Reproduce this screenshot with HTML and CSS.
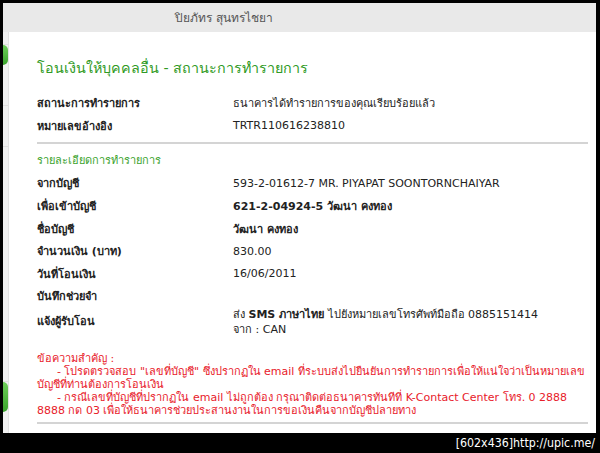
FILE: index.html
```html
<!DOCTYPE html>
<html lang="th">
<head>
<meta charset="utf-8">
<title>โอนเงินให้บุคคลอื่น</title>
<link rel="stylesheet" href="styles.css">
</head>
<body>
<div class="screen">
  <div class="window">
    <div class="topbar"><span class="user">ปิยภัทร สุนทรไชยา</span></div>
    <div class="main">
      <div class="side">
        <div class="seg s1"></div>
        <div class="tab t1"></div>
        <div class="seg s2"></div>
        <div class="seg s3"></div>
        <div class="seg s4"></div>
        <div class="tab t2"></div>
      </div>
      <div class="content">
        <h1 class="title">โอนเงินให้บุคคลอื่น - สถานะการทำรายการ</h1>
        <div class="rows">
          <div class="row"><div class="label">สถานะการทำรายการ</div><div class="value">ธนาคารได้ทำรายการของคุณเรียบร้อยแล้ว</div></div>
          <div class="row"><div class="label">หมายเลขอ้างอิง</div><div class="value">TRTR110616238810</div></div>
        </div>
        <hr class="rule">
        <h2 class="subtitle">รายละเอียดการทำรายการ</h2>
        <div class="rows">
          <div class="row"><div class="label">จากบัญชี</div><div class="value">593-2-01612-7 MR. PIYAPAT SOONTORNCHAIYAR</div></div>
          <div class="row"><div class="label">เพื่อเข้าบัญชี</div><div class="value strong">621-2-04924-5 วัฒนา คงทอง</div></div>
          <div class="row"><div class="label">ชื่อบัญชี</div><div class="value strong">วัฒนา คงทอง</div></div>
          <div class="row"><div class="label">จำนวนเงิน (บาท)</div><div class="value">830.00</div></div>
          <div class="row"><div class="label">วันที่โอนเงิน</div><div class="value">16/06/2011</div></div>
          <div class="row"><div class="label">บันทึกช่วยจำ</div><div class="value"></div></div>
          <div class="row tall"><div class="label">แจ้งผู้รับโอน</div><div class="value">ส่ง <b>SMS ภาษาไทย</b> ไปยังหมายเลขโทรศัพท์มือถือ 0885151414<br>จาก : CAN</div></div>
        </div>
        <div class="notice">
          <div>ข้อความสำคัญ :</div>
          <div class="item">- โปรดตรวจสอบ "เลขที่บัญชี" ซึ่งปรากฏใน email ที่ระบบส่งไปยืนยันการทำรายการเพื่อให้แน่ใจว่าเป็นหมายเลขบัญชีที่ท่านต้องการโอนเงิน</div>
          <div class="item">- กรณีเลขที่บัญชีที่ปรากฏใน email ไม่ถูกต้อง กรุณาติดต่อธนาคารทันทีที่ K-Contact Center โทร. 0 2888 8888 กด 03 เพื่อให้ธนาคารช่วยประสานงานในการขอเงินคืนจากบัญชีปลายทาง</div>
        </div>
        <hr class="rule last">
      </div>
    </div>
  </div>
  <div class="footer">[602x436]http://upic.me/</div>
</div>
</body>
</html>
```
FILE: styles.css
```css
html, body {
  margin: 0;
  padding: 0;
  background: #000;
}
body {
  width: 600px;
  height: 453px;
  overflow: hidden;
  font-family: "DejaVu Sans", Tahoma, sans-serif;
  font-size: 11px;
  color: #222;
}
.screen {
  width: 600px;
  height: 453px;
  display: flex;
  flex-direction: column;
}
.window {
  margin: 3px 0 0 3px;
  width: 593px;
  height: 430px;
  background: #fff;
  display: flex;
  flex-direction: column;
  overflow: hidden;
}
.topbar {
  height: 29px;
  background: #e9e9e9;
  display: flex;
  align-items: center;
  padding-left: 172px;
  flex: none;
}
.user {
  font-size: 12px;
  color: #555;
}
.main {
  flex: 1;
  display: flex;
}
.side {
  width: 5px;
  background: #f1f1f1;
  border-right: 1px solid #e2e2e2;
  display: flex;
  flex-direction: column;
  flex: none;
}
.seg { border-bottom: 1px solid #e0e0e0; }
.s1 { height: 12px; }
.s2 { height: 40px; }
.s3 { height: 40px; }
.s4 { height: 234px; }
.tab {
  background: linear-gradient(#6fcf5a, #3aa22c);
  border-radius: 0 5px 5px 0;
}
.t1 { height: 20px; }
.t2 { height: 30px; }
.content {
  flex: 1;
  padding: 0 8px 0 28px;
}
.title {
  margin: 26px 0 0;
  padding-bottom: 6px;
  font-size: 14.3px;
  font-weight: normal;
  color: #2f9a24;
  line-height: 20px;
}
.rule {
  margin: 0;
  border: 0;
  height: 2px;
  background: #d4d4d4;
}
.rows { padding: 8px 0 5px; }
.row {
  display: flex;
  height: 22.6px;
  align-items: center;
}
.row.tall { height: 28px; line-height: 15px; }
.label {
  width: 196px;
  font-weight: bold;
  flex: none;
}
.value.strong { font-weight: bold; }
.subtitle {
  margin: 9px 0 0;
  font-size: 11px;
  font-weight: normal;
  color: #3aa22c;
  line-height: 16px;
}
.subtitle + .rows { padding-top: 3px; }
.notice {
  color: #e8202a;
  line-height: 13px;
  margin-top: 11px;
  padding-bottom: 5px;
}
.item { text-indent: 20px; }
.footer {
  flex: 1;
  color: #fff;
  font-family: "DejaVu Sans Condensed", "DejaVu Sans", sans-serif;
  font-size: 12.3px;
  text-align: right;
  padding: 3px 5px 0 0;
}
```
